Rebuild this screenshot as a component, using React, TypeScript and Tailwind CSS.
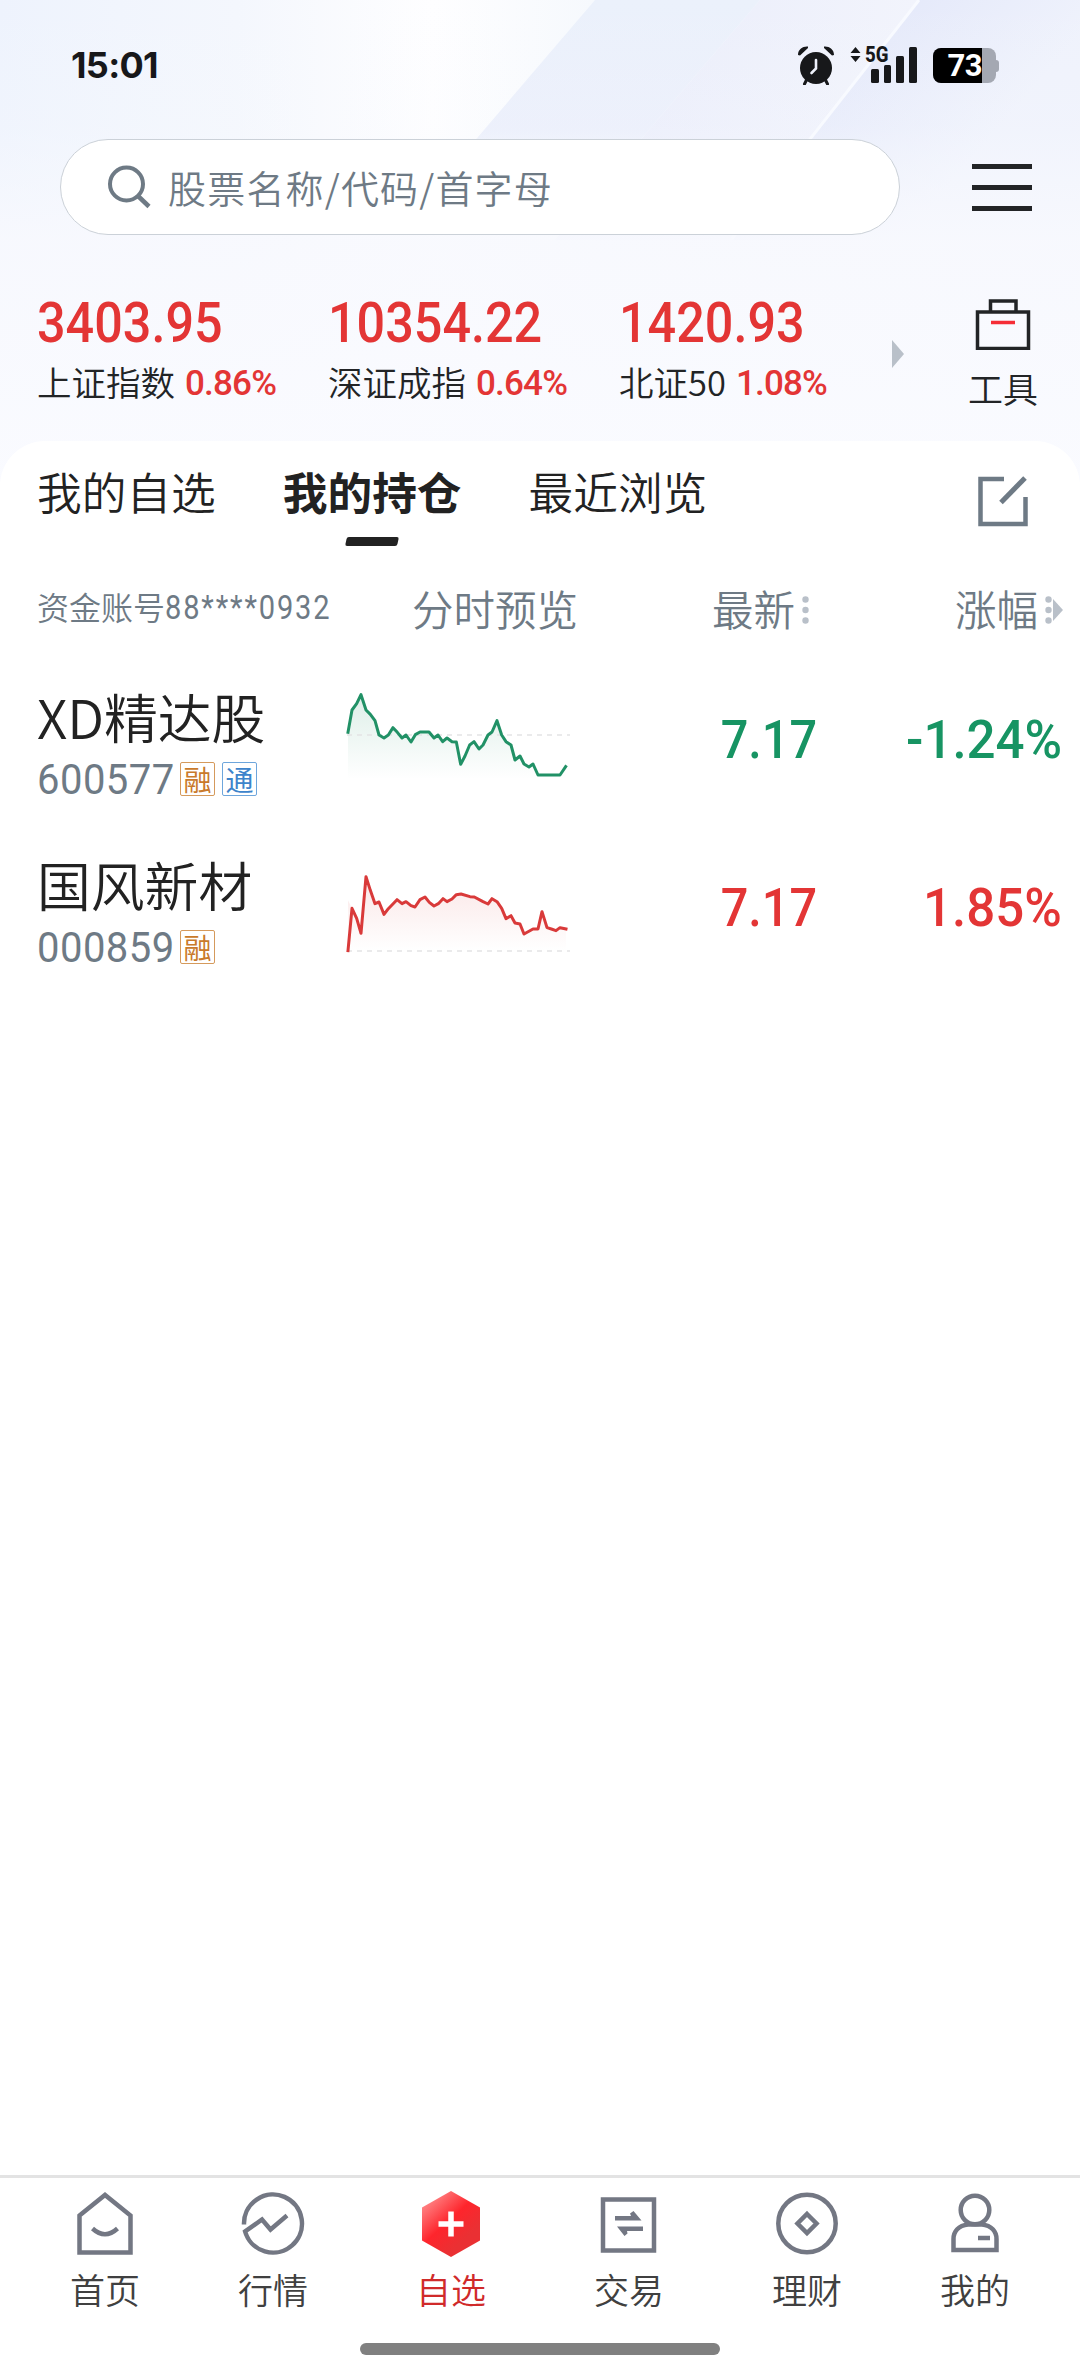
import React from 'react';
import clsx from 'clsx';

type Trend = 'up' | 'down';

interface MarketIndex {
  name: string;
  value: string;
  change: string;
}

interface Holding {
  name: string;
  code: string;
  tags: ('融' | '通')[];
  price: string;
  change: string;
  trend: Trend;
  baseline: number;
  points: number[][];
}

const INDEXES: MarketIndex[] = [
  { name: '上证指数', value: '3403.95', change: '0.86%' },
  { name: '深证成指', value: '10354.22', change: '0.64%' },
  { name: '北证50', value: '1420.93', change: '1.08%' },
];

const TABS = ['我的自选', '我的持仓', '最近浏览'];

const HOLDINGS: Holding[] = [
  {
    name: 'XD精达股',
    code: '600577',
    tags: ['融', '通'],
    price: '7.17',
    change: '-1.24%',
    trend: 'down',
    baseline: 195,
    points: [
      [54, 187], [66, 120], [80, 101], [93, 74], [108, 120], [121, 133], [135, 152], [147, 195],
      [162, 204], [175, 195], [189, 173], [202, 187], [216, 204], [228, 195], [243, 216], [256, 194],
      [270, 186], [297, 186], [312, 204], [324, 195], [338, 215], [351, 204], [366, 215], [379, 216],
      [392, 283], [405, 258], [419, 225], [432, 215], [447, 237], [459, 225], [474, 195], [486, 186],
      [501, 152], [515, 195], [528, 215], [543, 225], [555, 270], [570, 258], [582, 282], [597, 291],
      [609, 282], [624, 315], [690, 315], [707, 290],
    ],
  },
  {
    name: '国风新材',
    code: '000859',
    tags: ['融'],
    price: '7.17',
    change: '1.85%',
    trend: 'up',
    baseline: 339,
    points: [
      [54, 338], [66, 211], [80, 241], [93, 286], [108, 116], [121, 157], [135, 197], [147, 192],
      [162, 229], [175, 212], [201, 185], [216, 197], [228, 191], [243, 203], [255, 207], [270, 185],
      [285, 177], [298, 193], [312, 204], [325, 197], [339, 182], [351, 191], [366, 183], [379, 170],
      [393, 168], [420, 176], [433, 177], [459, 191], [474, 198], [486, 182], [501, 191], [515, 211],
      [528, 242], [543, 233], [555, 255], [570, 258], [582, 288], [609, 273], [624, 273], [636, 221],
      [651, 269], [664, 273], [678, 278], [690, 269], [708, 273],
    ],
  },
];

function Backdrop() {
  return (
    <svg className="absolute inset-x-0 top-0" width="1080" height="500" viewBox="0 0 1080 500">
      <defs>
        <linearGradient id="base" x1="0" y1="0" x2="1" y2="0">
          <stop offset="0" stopColor="#eef3fd" />
          <stop offset="0.22" stopColor="#f4f7fd" />
          <stop offset="0.4" stopColor="#fefeff" />
          <stop offset="0.55" stopColor="#f6f9fd" />
          <stop offset="1" stopColor="#f0f3fc" />
        </linearGradient>
        <linearGradient id="bandA" x1="0" y1="0" x2="0" y2="1">
          <stop offset="0" stopColor="#ebf1fb" />
          <stop offset="0.55" stopColor="#eaeefb" />
          <stop offset="1" stopColor="#f4f6fd" stopOpacity="0" />
        </linearGradient>
        <linearGradient id="bandB" x1="0" y1="0" x2="1" y2="0">
          <stop offset="0" stopColor="#e8ebfa" />
          <stop offset="1" stopColor="#f2f4fc" />
        </linearGradient>
        <linearGradient id="bandC" x1="0" y1="0" x2="1" y2="0.6">
          <stop offset="0.2" stopColor="#e1e6f9" />
          <stop offset="0.8" stopColor="#eff2fc" />
        </linearGradient>
        <linearGradient id="fade" x1="0" y1="0" x2="0" y2="1">
          <stop offset="0" stopColor="#f8fafe" stopOpacity="0" />
          <stop offset="0.25" stopColor="#f8fafe" stopOpacity="0.2" />
          <stop offset="0.48" stopColor="#f8f9fe" stopOpacity="0.9" />
          <stop offset="1" stopColor="#fafbff" />
        </linearGradient>
      </defs>
      <rect width="1080" height="500" fill="url(#base)" />
      <path d="M595 0H760L555 240H390Z" fill="url(#bandA)" />
      <path d="M760 0H919L731 240H555Z" fill="url(#bandB)" />
      <path d="M919 0H1080V240H731Z" fill="url(#bandC)" />
      <path d="M919 0L731 240" stroke="#f8faff" strokeWidth="3" />
      <rect width="1080" height="500" fill="url(#fade)" />
    </svg>
  );
}

function StatusBar() {
  return (
    <div className="flex h-[129px] items-center justify-between pr-[81px] pl-[71px]">
      <span className="font-['Inter'] text-[36px] leading-[40px] font-bold tracking-[-0.7px] text-[#17181a]">15:01</span>
      <div className="flex items-center">
        <svg width="38" height="40" viewBox="0 0 38 40">
          <circle cx="19" cy="23" r="16" fill="#17181a" />
          <path d="M1 10C1 4 6 1 11 1.500L11 3L3 10.500Z M37 10C37 4 32 1 27 1.500L27 3L35 10.500Z" fill="#17181a" />
          <path d="M10 34L7.500 39M28 34L30.500 39" stroke="#17181a" strokeWidth="3" strokeLinecap="round" />
          <path d="M19 15V23.500L14.500 28" stroke="#eef1fb" strokeWidth="2.600" fill="none" strokeLinecap="round" />
        </svg>
        <div className="relative ml-[15px] h-[38px] w-[68px]">
          <svg width="68" height="38" viewBox="0 0 68 38" fill="#17181a">
            <path d="M5.500 1L10.500 7H0.500ZM5.500 16L0.500 10H10.500Z" />
            <rect x="21" y="23" width="8" height="14" rx="1.500" />
            <rect x="34" y="19" width="7" height="18" rx="1.500" />
            <rect x="46" y="10" width="8" height="27" rx="1.500" />
            <rect x="59" y="1" width="8" height="36" rx="1.500" />
          </svg>
          <span className="absolute top-[-3px] left-[15px] origin-left scale-x-[.85] font-['Roboto'] text-[22px] leading-[24px] font-extrabold text-[#17181a]">
            5G
          </span>
        </div>
        <div className="mt-[2px] ml-[15px] flex items-center">
          <div className="flex h-[35px] w-[63px] items-center justify-end overflow-hidden rounded-[8px] bg-[#a4a8b2]">
            <div className="mr-[14px] flex h-full w-[49px] items-center justify-end bg-black">
              <span className="font-['Roboto'] text-[31px] leading-[34px] font-bold tracking-[-0.5px] text-white">73</span>
            </div>
          </div>
          <div className="h-[12px] w-[3px] rounded-r-[3px] bg-[#a4a8b2]" />
        </div>
      </div>
    </div>
  );
}

function SearchRow() {
  return (
    <div className="mt-[10px] flex items-center pl-[60px]">
      <div className="flex h-[96px] w-[840px] items-center rounded-full border border-[#cbd1d8] bg-white pl-[45px]">
        <svg width="46" height="46" viewBox="0 0 46 46" fill="none" stroke="#6e7a85" strokeWidth="4">
          <circle cx="20.500" cy="20" r="16.500" />
          <path d="M32 32L43 42.500" strokeWidth="4.500" />
        </svg>
        <span className="ml-[16px] text-[38px] leading-[48px] tracking-[1.2px] text-[#6e7a85]">股票名称/代码/首字母</span>
      </div>
      <div className="ml-[72px] flex w-[60px] flex-col gap-[16px]">
        <div className="h-[5px] bg-[#222426]" />
        <div className="h-[5px] bg-[#222426]" />
        <div className="h-[5px] bg-[#222426]" />
      </div>
    </div>
  );
}

function IndexRow() {
  return (
    <div className="flex h-[206px] items-start pt-[60px] pl-[37px]">
      {INDEXES.map(item => (
        <div key={item.name} className="w-[291px]">
          <div className="origin-left scale-x-[.915] font-['Roboto'] text-[55px] leading-[56px] font-medium text-[#e33535]">
            {item.value}
          </div>
          <div className="mt-[9px] flex h-[44px] items-center whitespace-nowrap">
            <span className="text-[34.5px] text-[#222426]">{item.name}</span>
            <span className="mt-[5px] ml-[10px] font-['Roboto'] text-[35px] tracking-[-0.8px] font-medium text-[#e33535]">{item.change}</span>
          </div>
        </div>
      ))}
      <svg className="mt-[45px] ml-[-18px]" width="12" height="28" viewBox="0 0 12 28">
        <path d="M0 0L12 14L0 28Z" fill="#b9c0c9" />
      </svg>
      <div className="mt-[3px] ml-[64px] flex flex-col items-center">
        <svg width="56" height="52" viewBox="0 0 56 52" fill="none" stroke="#222426" strokeWidth="3.500">
          <rect x="2.500" y="14" width="51" height="36.500" />
          <path d="M15.500 14V3H41V14" />
          <path d="M16 24.500H40" stroke="#f52d36" />
        </svg>
        <span className="mt-[14px] text-[35px] leading-[48px] text-[#222426]">工具</span>
      </div>
    </div>
  );
}

function TabRow() {
  return (
    <div className="flex h-[105px] items-start pl-[37px]">
      {TABS.map((tab, i) => (
        <div key={tab} className={clsx('flex flex-col items-center pt-[20px]', i < 2 ? 'mr-[67px]' : '')}>
          <span className={clsx('text-[44.7px] leading-[60px] text-[#222222]', i === 1 ? 'font-bold' : '')}>{tab}</span>
          {i === 1 && <div className="mt-[16px] h-[9px] w-[52px] -skew-x-12 rounded-[2px] bg-[#222222]" />}
        </div>
      ))}
      <svg className="mt-[34px] mr-[51px] ml-auto" width="52" height="53" viewBox="0 0 52 53" fill="none" stroke="#6e7a85" strokeWidth="4.500">
        <path d="M27 4H3.500V49H48.500V22" />
        <path d="M48 3L24 27.500" strokeWidth="5" />
      </svg>
    </div>
  );
}

function SortDots() {
  return (
    <svg width="7" height="30" viewBox="0 0 7 30" fill="#b9c0c9">
      <circle cx="3.500" cy="4.500" r="3.200" />
      <circle cx="3.500" cy="15" r="3.200" />
      <circle cx="3.500" cy="25.500" r="3.200" />
    </svg>
  );
}

function TableHead() {
  return (
    <div className="flex h-[126px] items-start pt-[32px] pl-[37px] text-[41.5px] leading-[60px] text-[#6e7a85]">
      <div className="flex w-[375px] text-[32px] leading-[56px]">
        <span>资金账号</span>
        <span className="mt-[2px] origin-left scale-x-[.88] font-['Roboto'] text-[33px] font-normal tracking-[2.1px]">88****0932</span>
      </div>
      <span className="w-[170px]">分时预览</span>
      <div className="flex w-[227px] items-center justify-end gap-[7px]">
        <span>最新</span>
        <span className="mt-[4px]"><SortDots /></span>
      </div>
      <div className="flex w-[254px] items-center justify-end">
        <span>涨幅</span>
        <span className="mt-[4px] ml-[7px]"><SortDots /></span>
        <svg className="mt-[4px] ml-[1px]" width="10" height="22" viewBox="0 0 10 22">
          <path d="M0 0L10 11L0 22Z" fill="#b9c0c9" />
        </svg>
      </div>
    </div>
  );
}

function Sparkline({ item }: { item: Holding }) {
  const color = item.trend === 'up' ? '#d93a3a' : '#219166';
  const line = item.points.map(p => p.join(',')).join(' ');
  const first = item.points[0];
  const last = item.points[item.points.length - 1];
  const bottom = item.trend === 'up' ? 338 : 328;
  const startY = item.trend === 'up' ? 187 : first[1];
  const area = `${first[0]},${bottom} ${first[0]},${startY} ${line.slice(line.indexOf(' ') + 1)} ${last[0]},${bottom}`;
  const gid = `fill-${item.code}`;
  return (
    <svg className="mt-[18px]" width="227" height="97" viewBox="45 60 681 291" fill="none">
      <defs>
        <linearGradient id={gid} gradientUnits="userSpaceOnUse" x1="0" y1="74" x2="0" y2={bottom}>
          <stop offset="0" stopColor={color} stopOpacity="0.15" />
          <stop offset="1" stopColor={color} stopOpacity="0" />
        </linearGradient>
      </defs>
      <polygon points={area} fill={`url(#${gid})`} />
      <path d={`M51 ${item.baseline}H720`} stroke="#e3e3e5" strokeWidth="5" strokeDasharray="15 15" />
      <polyline points={line} stroke={color} strokeWidth="9" strokeLinejoin="round" strokeLinecap="square" />
    </svg>
  );
}

function HoldingRow({ item }: { item: Holding }) {
  const tone = item.trend === 'up' ? 'text-[#e33535]' : 'text-[#179463]';
  return (
    <div className="flex h-[168px] items-start pl-[37px]">
      <div className="w-[308px] pt-[12px]">
        <div className="text-[53.8px] leading-[64px] whitespace-nowrap text-[#222222]">{item.name}</div>
        <div className="mt-[14px] flex h-[34px] items-center gap-[7px]">
          <span className="mr-[-12px] origin-left scale-x-[.93] font-['Roboto'] text-[43px] leading-[34px] font-normal tracking-[0.5px] text-[#6e7a85]">
            {item.code}
          </span>
          {item.tags.map(tag => (
            <span
              key={tag}
              className={clsx(
                'flex h-[34px] w-[35px] items-center justify-center rounded-[2px] border-[1.5px] text-[28px] leading-[28px] font-normal',
                tag === '融' ? 'border-[#d59a5c] text-[#c97a2b]' : 'border-[#6ea6dc] text-[#3d84cb]',
              )}
            >
              {tag}
            </span>
          ))}
        </div>
      </div>
      <Sparkline item={item} />
      <div className={clsx("flex h-[134px] w-[245px] items-center justify-end font-['Roboto'] text-[54px] font-medium", tone)}>
        <span className="origin-right scale-x-[.9]">{item.price}</span>
      </div>
      <div className={clsx("flex h-[134px] w-[245px] items-center justify-end font-['Roboto'] text-[54px] font-medium", tone)}>
        <span className="origin-right scale-x-[.945]">{item.change}</span>
      </div>
    </div>
  );
}

// 64x70 icon boxes, centred over their labels
const NAV_ITEMS = [
  {
    label: '首页',
    icon: (
      <>
        <path d="M6.500 26.500L32 6L57.500 26.500V63.500H6.500Z" />
        <path d="M19.500 39.500Q32 51 44.500 39.500" />
      </>
    ),
  },
  {
    label: '行情',
    icon: <path d="M3 35.500A29 29 0 1 1 4.100 42.500L21 30.500L29.500 40.500L46 26.500" />,
  },
  {
    label: '自选',
    active: true,
    icon: (
      <>
        <defs>
          <linearGradient id="hex" x1="0" y1="0" x2="0.8" y2="1">
            <stop offset="0.05" stopColor="#ff9a9a" />
            <stop offset="0.5" stopColor="#fe252c" />
            <stop offset="0.8" stopColor="#ea3033" />
          </linearGradient>
        </defs>
        <path d="M32 2L61 18.500V51.500L32 68L3 51.500V18.500Z" fill="url(#hex)" stroke="none" />
        <path d="M32 22.500V47.500M19.500 35H44.500" stroke="#ffffff" strokeWidth="5.500" />
      </>
    ),
  },
  {
    label: '交易',
    icon: (
      <>
        <rect x="6" y="10.500" width="51" height="51" />
        <g fill="#737783" stroke="none">
          <path d="M18 27H34L33 24.500L36.500 22L44.500 31.500H18Z" />
          <path d="M46 42H30L30.500 44.500L27.500 47L20 37.500H46Z" />
        </g>
      </>
    ),
  },
  {
    label: '理财',
    icon: (
      <>
        <circle cx="32" cy="34.500" r="28.700" />
        <path d="M32 25L41.500 34.500L32 44L22.500 34.500Z" />
      </>
    ),
  },
  {
    label: '我的',
    icon: (
      <>
        <circle cx="32" cy="21" r="14.300" />
        <path d="M25 35.500C15.500 36.500 10.500 42.500 10.500 50V61H53.500V50C53.500 42.500 48.500 36.500 39 35.500Z" />
        <path d="M35 49H47" />
      </>
    ),
  },
];

function BottomNav() {
  return (
    <nav className="mt-auto h-[201px] border-t-[3px] border-[#e3e3e3] bg-white">
      <div className="grid grid-cols-[158px_repeat(4,178px)_158px] px-[26px] pt-[11px]">
        {NAV_ITEMS.map(item => (
          <div key={item.label} className="flex flex-col items-center">
            <svg width="64" height="70" viewBox="0 0 64 70" fill="none" stroke="#737783" strokeWidth="4.500">
              {item.icon}
            </svg>
            <span className={clsx('mt-[5px] text-[35px] leading-[50px]', item.active ? 'text-[#d02a2a]' : 'text-[#404040]')}>
              {item.label}
            </span>
          </div>
        ))}
      </div>
      <div className="mx-auto mt-[29px] h-[12px] w-[360px] rounded-full bg-[#808080]" />
    </nav>
  );
}

export default function App() {
  return (
    <div className="relative flex h-[2376px] w-[1080px] flex-col overflow-hidden bg-white font-['Noto_Sans_CJK_SC',sans-serif] font-[350]">
      <Backdrop />
      <div className="relative flex flex-1 flex-col">
        <StatusBar />
        <SearchRow />
        <IndexRow />
        <main className="flex-1 rounded-t-[45px] bg-white">
          <TabRow />
          <TableHead />
          {HOLDINGS.map(item => (
            <HoldingRow key={item.code} item={item} />
          ))}
        </main>
        <BottomNav />
      </div>
    </div>
  );
}
